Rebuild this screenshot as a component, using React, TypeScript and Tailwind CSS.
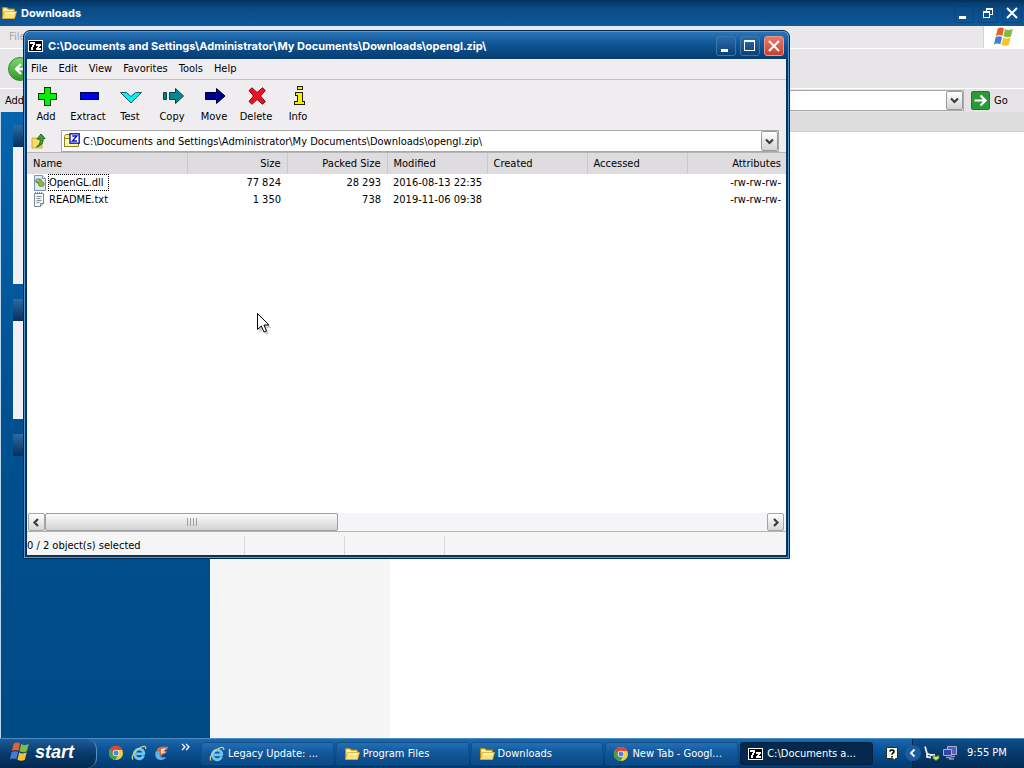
import type { ReactNode } from "react";

const ARCHIVE_PATH =
  "C:\\Documents and Settings\\Administrator\\My Documents\\Downloads\\opengl.zip\\";

/* ---------- icons ---------- */

function FolderIcon() {
  return (
    <svg width="16" height="16" viewBox="0 0 16 16" aria-hidden="true">
      <path d="M1.500 2.500h4.500l1.500 1.500h6v9h-12z" fill="#f4c94a" stroke="#b98a17" strokeWidth="1" />
      <path d="M2.500 3.500h3l1.500 1.500h5.500v2h-10z" fill="#fff3b0" />
      <path d="M3.500 6.500h12l-2 7h-12z" fill="#fbe27a" stroke="#d9a935" strokeWidth="0.800" />
      <path d="M4 7.300h10.500l-.5 1.500H3.600z" fill="#fff4b8" />
    </svg>
  );
}

function WindowsFlag({ size }: { size: 18 | 22 }) {
  return (
    <svg width={size} height={size} viewBox="0 0 20 20" aria-hidden="true">
      <path d="M4.200 2.500C6.300 1 8 1.200 10 2.300L8.500 9C6.800 8 4.800 8 2.600 9.300z" fill="#e8602c" />
      <path d="M11 2.800C13 4 15.500 4 18 2.600L16.300 9.300C14 10.700 11.600 10.400 9.500 9.300z" fill="#7dbb42" />
      <path d="M2.400 10.200C4.500 9 6.500 9 8.300 10L6.700 16.700C4.800 15.600 2.900 15.600.8 16.900z" fill="#3f7fd8" />
      <path d="M9.300 10.400C11.300 11.600 13.800 11.500 16.100 10.300L14.400 17C12.200 18.400 9.800 18.200 7.700 17z" fill="#f7c52b" />
    </svg>
  );
}

function SevenZipIcon() {
  return (
    <svg width="16" height="16" viewBox="0 0 16 16" aria-hidden="true" shapeRendering="crispEdges">
      <rect x="0.500" y="2.500" width="14" height="11" fill="#000" stroke="#fff" />
      <path d="M2 4h5v3h-1v2h-1v3h-2v-3h1v-2h1v-1h-3z" fill="#fff" />
      <path d="M8 6h5v2h-1v1h-1v1h2v2h-5v-2h1v-1h1v-1h-2z" fill="#fff" />
    </svg>
  );
}

function IeIcon() {
  return (
    <svg width="16" height="16" viewBox="0 0 16 16" aria-hidden="true">
      <path
        d="M12.600 10.800A4.800 4.800 0 1 1 12.800 7.600L12.600 8.800H5"
        fill="none"
        stroke="#6ec5f8"
        strokeWidth="2.800"
      />
      <path d="M2 14.500C-.5 12 4 4.500 11 1.800C14 .8 15.500 1.800 14.500 4" fill="none" stroke="#e9cf70" strokeWidth="1.200" />
    </svg>
  );
}

function ChromeIcon() {
  return (
    <svg width="16" height="16" viewBox="0 0 16 16" aria-hidden="true">
      <circle cx="8" cy="8" r="7" fill="#f6cf3c" />
      <path d="M8 1a7 7 0 0 0-6.100 3.600L5.300 10L8 8V5h6.300A7 7 0 0 0 8 1z" fill="#dd4433" />
      <path d="M1.900 4.600A7 7 0 0 0 7.400 15L10.500 9.800L8 11L5.200 9.500z" fill="#3f9e49" />
      <circle cx="8" cy="8" r="3.300" fill="#f4f4f4" />
      <circle cx="8" cy="8" r="2.500" fill="#4a86d8" />
    </svg>
  );
}

function FirefoxEIcon() {
  return (
    <svg width="16" height="16" viewBox="0 0 16 16" aria-hidden="true">
      <path d="M3 4C6 1 10 2 14 1.500C14.500 4 12 5 10 5.500L13 6.500C12 9 9 9.500 7.500 10L8 12L3 10z" fill="#e2683c" />
      <path d="M7 4C9 3 12 4 13 3L9 6.500L12 7L7 9z" fill="#f6ddd0" />
      <path d="M2 6C0 10 2 15 7 15C9.500 15 11 14 12 12L8 12.500C5.500 12 5 10 5.500 7z" fill="#5fb2ea" />
    </svg>
  );
}

function AddIcon() {
  return (
    <svg width="24" height="24" viewBox="0 0 24 24" aria-hidden="true" shapeRendering="crispEdges">
      <path d="M10.500 3.500h6v6h6v6h-6v6h-6v-6h-6v-6h6z" fill="#00f400" stroke="#123c12" />
    </svg>
  );
}

function ExtractIcon() {
  return (
    <svg width="24" height="24" viewBox="0 0 24 24" aria-hidden="true" shapeRendering="crispEdges">
      <rect x="4.500" y="8.500" width="18" height="7" fill="#0000f0" stroke="#000044" />
    </svg>
  );
}

function TestIcon() {
  return (
    <svg width="24" height="24" viewBox="0 0 24 24" aria-hidden="true">
      <path d="M2.500 8.500h6l4.500 4l4.500-4h6L13 19z" fill="#00f2f2" stroke="#1c5a60" />
    </svg>
  );
}

function CopyIcon() {
  return (
    <svg width="24" height="24" viewBox="0 0 24 24" aria-hidden="true">
      <path d="M3.500 8.500h3v7h-3z" fill="#008a8a" stroke="#123c3c" />
      <path d="M9.500 8.500h6v-4l8 7.500l-8 7.500v-4h-6z" fill="#008a8a" stroke="#123c3c" />
    </svg>
  );
}

function MoveIcon() {
  return (
    <svg width="24" height="24" viewBox="0 0 24 24" aria-hidden="true">
      <path d="M3.500 8.500h11v-4l8.500 7.500l-8.500 7.500v-4h-11z" fill="#000090" stroke="#000038" />
    </svg>
  );
}

function DeleteIcon() {
  return (
    <svg width="24" height="24" viewBox="0 0 24 24" aria-hidden="true">
      <path
        d="M5 6.500L8 3.800L13 8.500L18.500 3.800L21.300 6.500L16.500 12L21.300 17.500L18.500 20.300L13 15.500L8 20.300L5 17.500L9.500 12z"
        fill="#f01020"
        stroke="#6a1018"
      />
    </svg>
  );
}

function InfoIcon() {
  return (
    <svg width="24" height="24" viewBox="0 0 24 24" aria-hidden="true" shapeRendering="crispEdges">
      <path d="M11.500 2.500h5v3h-5z" fill="#f8f000" stroke="#222200" />
      <path d="M9.500 8.500h7v9h2v3h-10v-3h3v-6h-2z" fill="#f8f000" stroke="#222200" />
    </svg>
  );
}

function UpFolderIcon() {
  return (
    <svg width="16" height="16" viewBox="0 0 16 16" aria-hidden="true">
      <path d="M1 5h4l1.500 1.500H11V15H1z" fill="#f7dc6c" stroke="#d0a93c" />
      <path d="M5.500 14C9 11.500 9.500 9 9 6H6L10 1L14 5.500H12C12.500 9.500 10.500 13 5.500 14z" fill="#3aa632" stroke="#1d6b1a" />
    </svg>
  );
}

function ArchivePathIcon() {
  return (
    <svg width="16" height="16" viewBox="0 0 16 16" aria-hidden="true">
      <path d="M.5 3.500l1-2h4l1 2v10h-6z" fill="#f6f08c" stroke="#8a8420" />
      <path d="M.5 5.500h14v8h-14z" fill="#fbf7a8" stroke="#8a8420" />
      <rect x="6" y="0.800" width="9.200" height="9.400" fill="#fff" stroke="#1414c8" strokeWidth="1.400" />
      <path d="M8.200 3h4.600L8.400 8h4.600" fill="none" stroke="#1414c8" strokeWidth="1.400" />
    </svg>
  );
}

function DllIcon() {
  return (
    <svg width="16" height="16" viewBox="0 0 16 16" aria-hidden="true">
      <path d="M2.500.5h8l3 3v12h-11z" fill="#dfe9fa" stroke="#7d90b4" />
      <path d="M10.500.5v3h3" fill="#fff" stroke="#7d90b4" />
      <ellipse cx="6.500" cy="6" rx="3" ry="2.300" fill="#58a846" stroke="#4a8a40" strokeWidth="0.600" />
      <ellipse cx="9.300" cy="9" rx="3" ry="2.600" fill="#93b43a" stroke="#5c7a34" strokeWidth="0.600" />
      <circle cx="8" cy="6.800" r="1.200" fill="#e8953c" />
      <circle cx="5.800" cy="5.500" r="0.900" fill="#c8e8b8" />
    </svg>
  );
}

function TxtIcon() {
  return (
    <svg width="16" height="16" viewBox="0 0 16 16" aria-hidden="true">
      <path d="M2.500 1.500h9v10l-3 3h-6z" fill="#f7f9fb" stroke="#7d888f" />
      <path d="M11.500 11.500h-3v3" fill="#d4dade" stroke="#7d888f" />
      <path d="M3 1h8" stroke="#8a6a3a" strokeWidth="1.600" strokeDasharray="1 1" />
      <path d="M4.500 4.500h5M4.500 6.500h4M4.500 8.500h5M4.500 10.500h3" stroke="#7f8f98" />
    </svg>
  );
}

function Chevron({ dir }: { dir: "down" | "left" | "right" }) {
  const d = {
    down: "M1 2.500L4.500 6L8 2.500",
    left: "M6 1L2.500 4.500L6 8",
    right: "M3 1L6.500 4.500L3 8",
  }[dir];
  return (
    <svg width="9" height="9" viewBox="0 0 9 9" aria-hidden="true">
      <path d={d} fill="none" stroke="#3c3c3c" strokeWidth="2.200" />
    </svg>
  );
}

function MinimizeGlyph() {
  return (
    <svg width="12" height="12" viewBox="0 0 12 12" aria-hidden="true" shapeRendering="crispEdges">
      <rect x="1" y="9" width="7" height="3" fill="#fff" />
    </svg>
  );
}

function MaximizeGlyph() {
  return (
    <svg width="12" height="12" viewBox="0 0 12 12" aria-hidden="true" shapeRendering="crispEdges">
      <path d="M.5 .5h10v10h-10zM.5 1.500h10" fill="none" stroke="#fff" />
    </svg>
  );
}

function RestoreGlyph() {
  return (
    <svg width="12" height="12" viewBox="0 0 12 12" aria-hidden="true" shapeRendering="crispEdges">
      <path d="M1.500 4.500h6v6h-6zM1 5.500h7M4.500 4V1.500h6v6H8M4 2h7" fill="none" stroke="#fff" />
    </svg>
  );
}

function CloseGlyph() {
  return (
    <svg width="12" height="12" viewBox="0 0 12 12" aria-hidden="true">
      <path d="M1 1L11 11M11 1L1 11" stroke="#fff" strokeWidth="2" />
    </svg>
  );
}

/* ---------- shared controls ---------- */

function CaptionButton({ label, danger, children }: { label: string; danger?: boolean; children: ReactNode }) {
  const tone = danger
    ? "border-[#e89a90] from-[#e8796a] to-[#c8402c]"
    : "border-[#3a76b0] from-[#2c6cab] to-[#0a4078]";
  return (
    <button
      type="button"
      aria-label={label}
      className={`flex size-5 items-center justify-center rounded-[3px] border bg-linear-to-b ${tone}`}
    >
      {children}
    </button>
  );
}

function PlainCaptionButton({ label, children }: { label: string; children: ReactNode }) {
  return (
    <button
      type="button"
      aria-label={label}
      className="flex size-5 items-center justify-center rounded-[3px] border border-[#0b4478]"
    >
      {children}
    </button>
  );
}

function DropButton({ label }: { label: string }) {
  return (
    <button
      type="button"
      aria-label={label}
      className="flex w-[17px] shrink-0 items-center justify-center rounded-[2px] border border-[#9a9a9a] bg-linear-to-b from-white to-[#d4d4d4]"
    >
      <Chevron dir="down" />
    </button>
  );
}

/* ---------- background window ---------- */

function SidePanel({ height }: { height: string }) {
  return (
    <section className="pl-3">
      <div className="h-[22px] bg-linear-to-b from-[#2b6ba5] to-[#04305c]" />
      <div className={`bg-[#f0f0f5] ${height}`} />
    </section>
  );
}

function ExplorerWindow() {
  return (
    <main className="flex min-h-0 flex-1 flex-col">
      <header className="flex h-[26px] shrink-0 items-center justify-between bg-linear-to-b from-[#02325c] via-[#0a4a85] via-30% to-[#0f599b] pr-0.5 pl-px">
        <h1 className="flex items-center gap-1 font-[Inter,sans-serif] text-[11px] font-bold text-white">
          <FolderIcon />
          Downloads
        </h1>
        <div className="flex gap-1">
          <PlainCaptionButton label="Minimize">
            <MinimizeGlyph />
          </PlainCaptionButton>
          <PlainCaptionButton label="Restore">
            <RestoreGlyph />
          </PlainCaptionButton>
          <PlainCaptionButton label="Close">
            <CloseGlyph />
          </PlainCaptionButton>
        </div>
      </header>

      <div className="flex h-[23px] shrink-0 border-b border-white bg-[#eae7ea]">
        <button type="button" className="px-[9px] text-[#a8a8a8]">
          File
        </button>
        <div className="ml-auto flex w-[41px] items-center justify-center border-l border-[#d4d4d4] bg-white">
          <WindowsFlag size={22} />
        </div>
      </div>

      <div className="flex h-10 shrink-0 items-center border-b border-white bg-[#e8e5e8] pl-2">
        <button
          type="button"
          aria-label="Back"
          className="flex size-6 items-center justify-center rounded-full border border-[#2c8a2c] bg-linear-to-b from-[#7fd46c] to-[#2f9a2c]"
        >
          <svg width="14" height="14" viewBox="0 0 14 14" aria-hidden="true">
            <path d="M8 2L3 7L8 12M3 7h10" fill="none" stroke="#fff" strokeWidth="2.400" />
          </svg>
        </button>
      </div>

      <form className="flex h-[23px] shrink-0 items-center bg-[#e6e3e6] pl-[5px]" onSubmit={(e) => e.preventDefault()}>
        <label htmlFor="explorer-address" className="w-16">
          Address
        </label>
        <div className="flex h-[21px] flex-1 border border-[#a9a9a9] bg-white">
          <input id="explorer-address" type="text" className="min-w-0 flex-1 px-1 outline-none" />
          <DropButton label="Show addresses" />
        </div>
        <button type="submit" className="flex w-[60px] items-center gap-1 pl-[7px]">
          <svg width="19" height="19" viewBox="0 0 19 19" aria-hidden="true">
            <rect x="0.500" y="0.500" width="18" height="18" rx="1.500" fill="#2a9a38" stroke="#1c7a2a" />
            <path d="M3.500 9.500h11M9.500 4.500l5 5l-5 5" fill="none" stroke="#fff" strokeWidth="2.200" />
          </svg>
          Go
        </button>
      </form>

      <div className="flex min-h-0 flex-1 border-l border-[#b9d6ee] bg-white">
        <aside className="flex w-[209px] shrink-0 flex-col gap-[15px] bg-linear-to-b from-[#0664ae] via-[#00508f] to-[#004a86] pt-[13px]">
          <SidePanel height="h-[137px]" />
          <SidePanel height="h-[98px]" />
          <SidePanel height="h-0" />
        </aside>
        <div className="flex flex-1 flex-col">
          <div className="h-5 shrink-0 border-b border-[#cfcfcf] bg-[#dedddd]" />
          <div className="w-[180px] flex-1 bg-[#f5f5f6]" />
        </div>
      </div>
    </main>
  );
}

/* ---------- archive window ---------- */

const MENUS = ["File", "Edit", "View", "Favorites", "Tools", "Help"];

const TOOLS: { label: string; icon: ReactNode }[] = [
  { label: "Add", icon: <AddIcon /> },
  { label: "Extract", icon: <ExtractIcon /> },
  { label: "Test", icon: <TestIcon /> },
  { label: "Copy", icon: <CopyIcon /> },
  { label: "Move", icon: <MoveIcon /> },
  { label: "Delete", icon: <DeleteIcon /> },
  { label: "Info", icon: <InfoIcon /> },
];

const COLUMNS: { label: string; align: string; width: string }[] = [
  { label: "Name", align: "text-left", width: "w-[160px]" },
  { label: "Size", align: "text-right", width: "w-[100px]" },
  { label: "Packed Size", align: "text-right", width: "w-[100px]" },
  { label: "Modified", align: "text-left", width: "w-[100px]" },
  { label: "Created", align: "text-left", width: "w-[100px]" },
  { label: "Accessed", align: "text-left", width: "w-[100px]" },
  { label: "Attributes", align: "text-right", width: "w-auto" },
];

const FILES = [
  { name: "OpenGL.dll", icon: <DllIcon />, focused: true, size: "77 824", packed: "28 293", modified: "2016-08-13 22:35" },
  { name: "README.txt", icon: <TxtIcon />, focused: false, size: "1 350", packed: "738", modified: "2019-11-06 09:38" },
];

function ArchiveWindow() {
  return (
    <section className="absolute top-[30px] left-[23px] flex h-[529px] w-[767px] flex-col overflow-hidden rounded-t-[7px] border border-[#02284e] bg-[#5a9ad6] p-px">
      <div className="flex min-h-0 flex-1 flex-col rounded-t-[6px] bg-[#04345f] px-0.5 pb-0.5">
        <header className="-mx-0.5 flex h-[27px] shrink-0 items-center justify-between rounded-t-[6px] bg-linear-to-b from-[#2a76b8] via-[#11579a] via-40% to-[#063c70] pr-1 pl-[3px]">
          <h2 className="flex items-center gap-1 font-[Inter,sans-serif] text-[11px] font-bold text-white">
            <SevenZipIcon />
            {ARCHIVE_PATH}
          </h2>
          <div className="flex gap-1">
            <CaptionButton label="Minimize">
              <MinimizeGlyph />
            </CaptionButton>
            <CaptionButton label="Maximize">
              <MaximizeGlyph />
            </CaptionButton>
            <CaptionButton label="Close" danger>
              <CloseGlyph />
            </CaptionButton>
          </div>
        </header>

        <div className="flex min-h-0 flex-1 flex-col bg-[#f0edf0]">
          <nav className="flex h-[21px] shrink-0 items-center gap-[11px] border-b border-[#c4c1c4] pl-1">
            {MENUS.map((menu) => (
              <button key={menu} type="button">
                {menu}
              </button>
            ))}
          </nav>

          <div className="-ml-0.5 flex h-[50px] shrink-0 pt-1">
            {TOOLS.map((tool) => (
              <button key={tool.label} type="button" className="flex w-[42px] flex-col items-center gap-px">
                {tool.icon}
                <span>{tool.label}</span>
              </button>
            ))}
          </div>

          <div className="flex h-[22px] shrink-0 items-center gap-3 pr-[7px] pl-1">
            <button type="button" aria-label="Up one level">
              <UpFolderIcon />
            </button>
            <div className="ml-0.5 flex h-[22px] flex-1 border border-[#a9a9a9] bg-white">
              <label htmlFor="archive-path" className="flex items-center pl-0.5">
                <ArchivePathIcon />
                <span className="sr-only">Path</span>
              </label>
              <input
                id="archive-path"
                type="text"
                defaultValue={ARCHIVE_PATH}
                className="min-w-0 flex-1 px-[3px] pt-0.5 outline-none"
              />
              <DropButton label="Show paths" />
            </div>
          </div>

          <div className="min-h-0 flex-1 overflow-hidden border-t border-[#b4b4b4] bg-white">
            <table className="w-full table-fixed border-collapse">
              <thead>
                <tr className="h-[21px] bg-[#dedcde]">
                  {COLUMNS.map((col) => (
                    <th
                      key={col.label}
                      scope="col"
                      className={`border-r border-[#cbc9cb] px-[6px] pt-px pb-0 font-normal last:border-r-0 last:pr-[5px] ${col.align} ${col.width}`}
                    >
                      {col.label}
                    </th>
                  ))}
                </tr>
              </thead>
              <tbody>
                {FILES.map((file) => (
                  <tr key={file.name} className="h-[17px] whitespace-nowrap">
                    <td className="py-0 pl-[5px]">
                      <div className="flex items-center">
                        {file.icon}
                        <span
                          className={`border border-dotted pr-1 leading-[15px] ${file.focused ? "border-black" : "border-transparent"}`}
                        >
                          {file.name}
                        </span>
                      </div>
                    </td>
                    <td className="px-[6px] py-0 text-right">{file.size}</td>
                    <td className="px-[6px] py-0 text-right">{file.packed}</td>
                    <td className="px-[6px] py-0">{file.modified}</td>
                    <td />
                    <td />
                    <td className="py-0 pr-[5px] text-right">-rw-rw-rw-</td>
                  </tr>
                ))}
              </tbody>
            </table>
          </div>

          <div className="flex h-[18px] shrink-0 bg-[#f5f4f6] pr-0.5 pl-px">
            <button
              type="button"
              aria-label="Scroll left"
              className="flex w-[17px] items-center justify-center rounded-[2px] border border-[#a6a6a6] bg-linear-to-b from-white to-[#d6d6d6]"
            >
              <Chevron dir="left" />
            </button>
            <div className="flex flex-1">
              <div className="flex w-[293px] items-center justify-center gap-0.5 rounded-[2px] border border-[#a0a0a0] bg-linear-to-b from-[#fbfbfb] to-[#d2d2d2]">
                <i className="h-2 w-px bg-[#a0a0a0]" />
                <i className="h-2 w-px bg-[#a0a0a0]" />
                <i className="h-2 w-px bg-[#a0a0a0]" />
                <i className="h-2 w-px bg-[#a0a0a0]" />
              </div>
            </div>
            <button
              type="button"
              aria-label="Scroll right"
              className="flex w-[17px] items-center justify-center rounded-[2px] border border-[#a6a6a6] bg-linear-to-b from-white to-[#d6d6d6]"
            >
              <Chevron dir="right" />
            </button>
          </div>

          <footer className="flex h-6 shrink-0 items-stretch border-t border-[#b4b4b4] bg-[#f5f5f5] pt-1">
            <span className="flex w-[218px] items-center border-r border-[#d8d8d8]">0 / 2 object(s) selected</span>
            <span className="w-[100px] border-r border-[#d8d8d8]" />
            <span className="w-[100px] border-r border-[#d8d8d8]" />
          </footer>
        </div>
      </div>

      <svg
        className="pointer-events-none absolute top-[281px] left-[232px]"
        width="18"
        height="24"
        viewBox="0 0 18 24"
        aria-hidden="true"
      >
        <path d="M3 4v17l4-4l3 6l3-1.500l-2.500-5.500h5z" fill="#000" opacity="0.200" />
        <path d="M1.500 1.500v16l3.800-3.500l2.700 6l2.500-1l-2.600-6h5.100z" fill="#fff" stroke="#000" />
      </svg>
    </section>
  );
}

/* ---------- taskbar ---------- */

const TASKS: { label: string; icon: ReactNode; active?: boolean }[] = [
  { label: "Legacy Update: ...", icon: <IeIcon /> },
  { label: "Program Files", icon: <FolderIcon /> },
  { label: "Downloads", icon: <FolderIcon /> },
  { label: "New Tab - Googl...", icon: <ChromeIcon /> },
  { label: "C:\\Documents a...", icon: <SevenZipIcon />, active: true },
];

function Taskbar() {
  return (
    <footer className="flex h-[30px] shrink-0 items-stretch border-t border-[#4a8cc4] bg-linear-to-b from-[#1f68ab] via-[#0d569a] via-30% to-[#023a70] text-white">
      <button
        type="button"
        className="flex w-[97px] items-center gap-1 rounded-r-[10px] border-r border-[#5a8fc0] bg-linear-to-b from-[#1d5c98] via-[#083a6c] to-[#04284e] pb-1 pl-[9px] font-['Liberation_Sans',sans-serif] text-[18px] font-bold italic"
      >
        <WindowsFlag size={22} />
        start
      </button>

      <div className="flex w-[104px] items-center gap-[7px] pb-px pl-[11px]">
        <button type="button" aria-label="Chrome">
          <ChromeIcon />
        </button>
        <button type="button" aria-label="Internet Explorer">
          <IeIcon />
        </button>
        <button type="button" aria-label="Browser chooser">
          <FirefoxEIcon />
        </button>
        <button type="button" aria-label="More shortcuts" className="ml-1 self-start pt-1">
          <svg width="9" height="8" viewBox="0 0 9 8" aria-hidden="true">
            <path d="M1 1l3 3l-3 3M5 1l3 3l-3 3" fill="none" stroke="#fff" strokeWidth="1.300" />
          </svg>
        </button>
      </div>

      <div className="flex min-w-0 flex-1 gap-0.5 pt-[3px] pb-[3px]">
        {TASKS.map((task) => (
          <button
            key={task.label}
            type="button"
            className={`flex min-w-0 flex-1 items-center gap-[3px] rounded-[3px] border pl-[7px] whitespace-nowrap ${
              task.active
                ? "border-[#02203f] bg-[#04284e]"
                : "border-[#11508c] bg-linear-to-b from-[#2470b4] via-[#135a9c] via-40% to-[#0a4a88]"
            }`}
          >
            <span className="shrink-0">{task.icon}</span>
            <span>{task.label}</span>
          </button>
        ))}
      </div>

      <div className="flex w-[39px] items-center justify-center">
        <svg width="13" height="14" viewBox="0 0 13 14" aria-hidden="true">
          <path d="M.5.500h11v11h-2v2l-3-2h-6z" fill="#fffde0" stroke="#20303c" />
          <path d="M4 4.500C4 2.500 8 2.500 8 4.500C8 6 6 6 6 7.800M6 9v1.500" fill="none" stroke="#000" strokeWidth="1.600" />
        </svg>
      </div>

      <div className="flex w-28 items-center gap-0.5 border-l border-[#02284e] bg-linear-to-b from-[#0f4f8c] via-[#063a6c] to-[#032c55] pb-px">
        <button type="button" aria-label="Show hidden icons" className="-ml-2 rounded-full bg-[#1d5c9c] p-0.5">
          <svg width="12" height="12" viewBox="0 0 12 12" aria-hidden="true">
            <path d="M7.500 2.500L4 6l3.500 3.500" fill="none" stroke="#fff" strokeWidth="1.800" />
          </svg>
        </button>
        <svg width="17" height="16" viewBox="0 0 17 16" aria-hidden="true">
          <path d="M2 1.500L4 8.500L8 10H12M4 8.500V12L8 12.500" fill="none" stroke="#e8ecf0" strokeWidth="1.800" />
          <path d="M10 10.500l3 1l3-1v3l-3 2l-3-2z" fill="#d9e25a" stroke="#4f7f2c" strokeWidth="0.800" />
        </svg>
        <svg width="16" height="16" viewBox="0 0 16 16" aria-hidden="true">
          <path d="M5.500 1.500h9v8h-9z" fill="#5560b8" stroke="#a8acd8" />
          <path d="M1.500 4.500h8v6h-8z" fill="#3a469c" stroke="#a8acd8" />
          <path d="M4 12.500h5M9 11.500h4M7 14h5" stroke="#9498cc" strokeWidth="1.600" />
        </svg>
        <time className="pl-[7px] whitespace-nowrap">9:55 PM</time>
      </div>
    </footer>
  );
}

export default function App() {
  return (
    <div className="relative flex h-screen flex-col overflow-hidden bg-white font-['DejaVu_Sans_Condensed','Liberation_Sans',sans-serif] text-[11px] leading-4 text-black">
      <ExplorerWindow />
      <ArchiveWindow />
      <Taskbar />
    </div>
  );
}
